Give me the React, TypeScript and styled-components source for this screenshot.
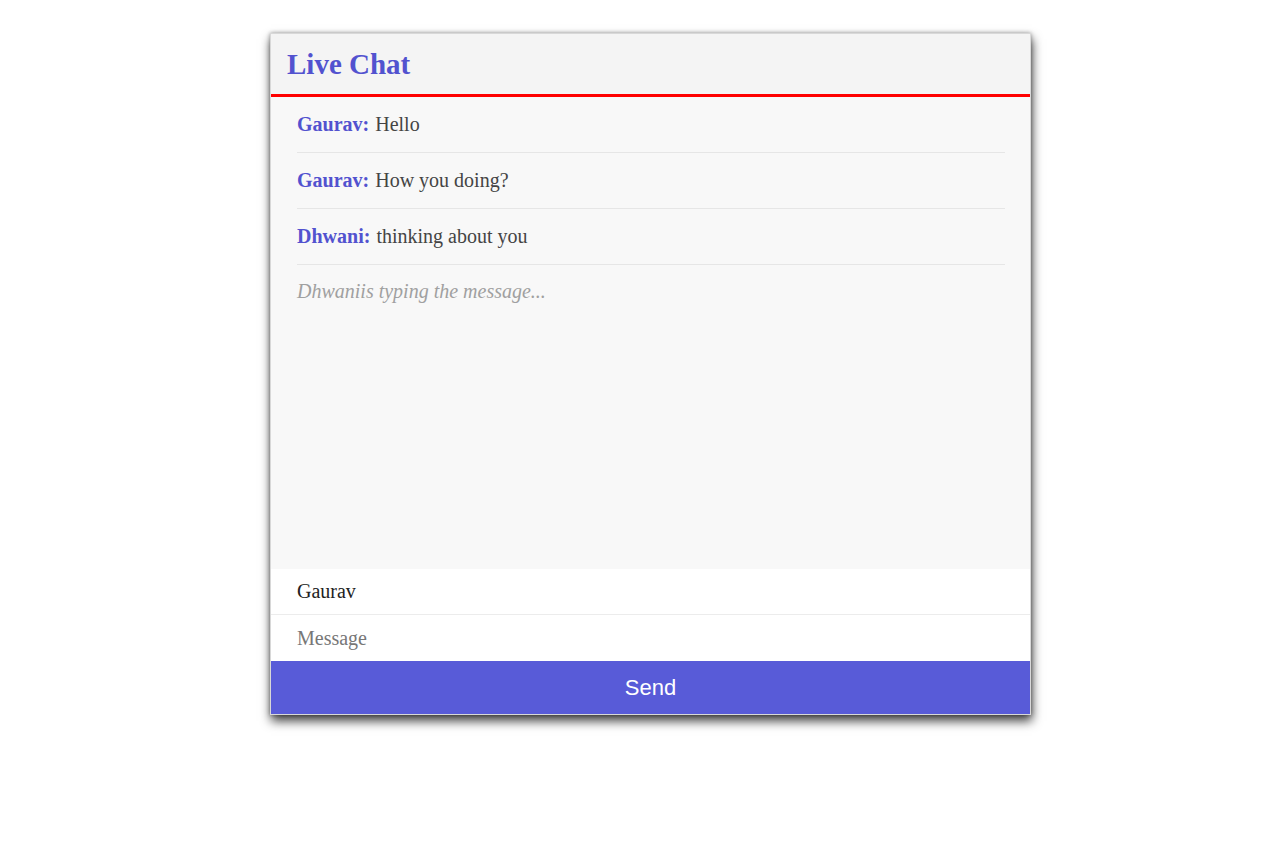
import React from 'react';
import styled, { createGlobalStyle } from 'styled-components';

const GlobalStyle = createGlobalStyle`
  body {
    margin: 0;
    background: #fff;
    font-family: "Liberation Serif", "Times New Roman", serif;
  }
`

const Page = styled.div`
  padding: 33px 0 40px 270px;
`
const Card = styled.div`
  width: 761px;
  display: flex;
  flex-direction: column;
  border: 1px solid #d8d8d8;
  box-sizing: border-box;
  box-shadow: 1px 6px 10px rgba(0, 0, 0, 0.75), 0 0 4px rgba(0, 0, 0, 0.35);
`
const Header = styled.div`
  background: #f4f4f4;
  height: 60px;
  padding: 0 16px;
  display: flex;
  align-items: center;
  border-bottom: 3px solid #ff0000;
`
const Title = styled.h1`
  margin: 0;
  font-size: 29px;
  font-weight: bold;
  color: #5252cf;
`
const Messages = styled.div`
  background: #f8f8f8;
  height: 472px;
  padding: 0 25px 0 26px;
`
const Row = styled.div`
  height: 55px;
  display: flex;
  align-items: center;
  border-bottom: 1px solid #e6e6e6;
  font-size: 20px;
  color: #444;
`
const Name = styled.strong`
  color: #5252cf;
  margin-right: 6px;
`
const Typing = styled.div`
  padding-top: 15px;
  font-size: 20px;
  font-style: italic;
  color: #a0a0a0;
`
const Field = styled.input<{ $last?: boolean }>`
  height: 46px;
  border: none;
  border-bottom: ${p => (p.$last ? 'none' : '1px solid #ececec')};
  background: #fff;
  padding: 0 26px;
  font-family: "Liberation Serif", "Times New Roman", serif;
  font-size: 20px;
  color: #222;
  outline: none;
  box-sizing: border-box;
  &::placeholder {
    color: #777;
  }
`
const SendButton = styled.button`
  height: 53px;
  border: none;
  background: #585bd8;
  color: #fff;
  font-family: "Liberation Sans", Arial, sans-serif;
  font-size: 22px;
  cursor: pointer;
`

const messages = [
  { name: 'Gaurav', text: 'Hello' },
  { name: 'Gaurav', text: 'How you doing?' },
  { name: 'Dhwani', text: 'thinking about you' },
];

function App() {
  return (
    <Page>
      <GlobalStyle />
      <Card>
        <Header>
          <Title>Live Chat</Title>
        </Header>
        <Messages>
          {messages.map((m, i) => (
            <Row key={i}>
              <Name>{m.name}:</Name>
              {m.text}
            </Row>
          ))}
          <Typing>Dhwaniis typing the message...</Typing>
        </Messages>
        <Field defaultValue="Gaurav" />
        <Field $last placeholder="Message" />
        <SendButton>Send</SendButton>
      </Card>
    </Page>
  );
}

export default App;
